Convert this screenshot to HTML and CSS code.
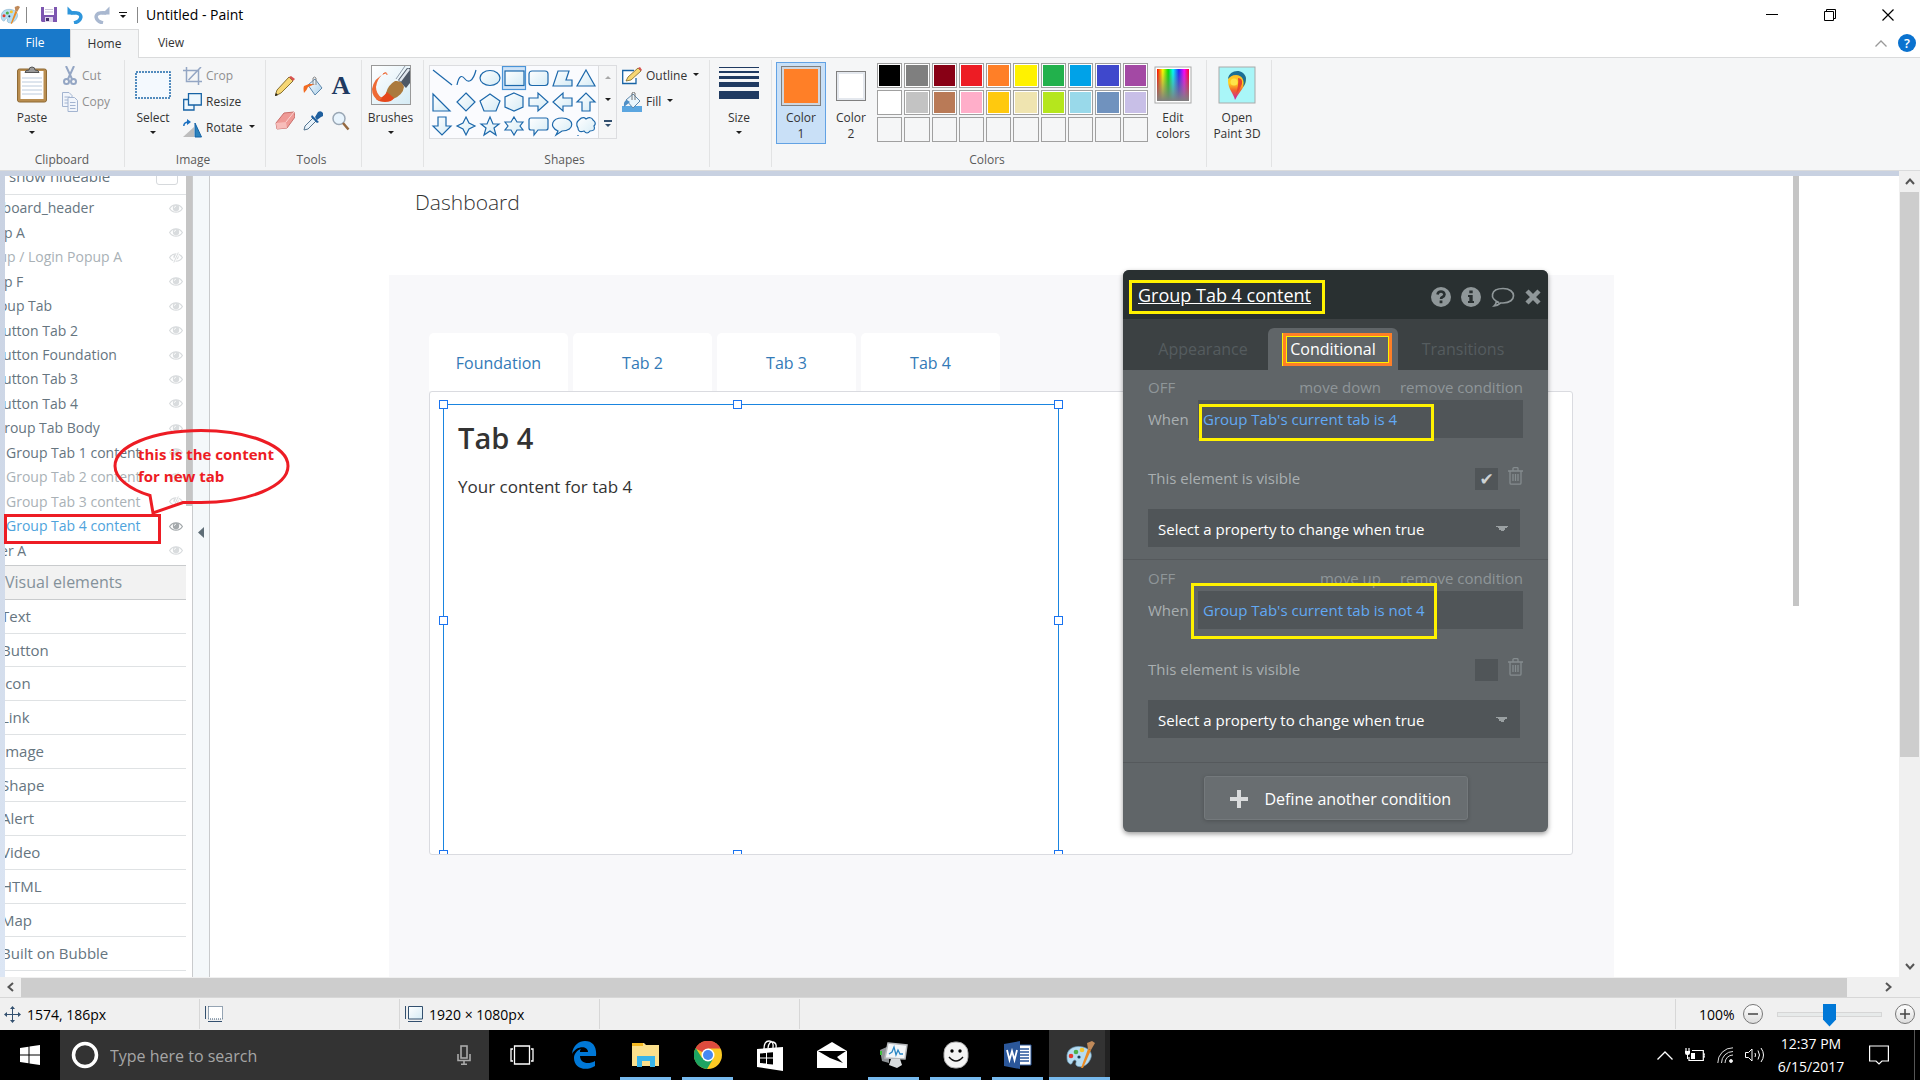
FILE: index.html
```html
<!DOCTYPE html>
<html lang="en">
<head>
<meta charset="utf-8">
<title>Untitled - Paint</title>
<link rel="stylesheet" href="styles.css">
</head>
<body>
<svg class="defs" aria-hidden="true">
  <defs>
    <linearGradient id="glass" x1="0" y1="0" x2="1" y2="1"><stop offset="0" stop-color="#fff"/><stop offset="1" stop-color="#d5ebf5"/></linearGradient>
    <linearGradient id="sky" x1="0" y1="0" x2="1" y2="1"><stop offset="0" stop-color="#fff"/><stop offset="1" stop-color="#a9cfea"/></linearGradient>
    <linearGradient id="rainbow"><stop offset="0" stop-color="#f00"/><stop offset=".18" stop-color="#ff0"/><stop offset=".35" stop-color="#0d0"/><stop offset=".5" stop-color="#0ff"/><stop offset=".68" stop-color="#22f"/><stop offset=".85" stop-color="#f0f"/><stop offset="1" stop-color="#f02"/></linearGradient>
    <linearGradient id="fade" x1="0" y1="0" x2="0" y2="1"><stop offset="0" stop-color="#808080" stop-opacity="0"/><stop offset="1" stop-color="#808080"/></linearGradient>
    <linearGradient id="drop" x1="0" y1="0" x2="0" y2="1"><stop offset="0" stop-color="#ffb52a"/><stop offset=".4" stop-color="#ffd21f"/><stop offset=".65" stop-color="#f4632a"/><stop offset="1" stop-color="#c01fb0"/></linearGradient>
  </defs>
  <symbol id="eye" viewBox="0 0 14 9"><path d="M.6 4.500C3.500-.4 10.500-.4 13.400 4.500 10.500 9.400 3.500 9.400.6 4.500Z" fill="none" stroke="currentColor" stroke-width="1.200"/><circle cx="7" cy="4" r="3.200" fill="currentColor"/><path d="M5.400 3.800A1.600 1.600 0 0 1 7 2.200" stroke="#fff" stroke-width=".8" fill="none"/></symbol>
  <symbol id="eye-off" viewBox="0 0 14 11"><path d="M.6 5.500C3.500.6 10.500.6 13.400 5.500 10.500 10.400 3.500 10.400.6 5.500Z" fill="none" stroke="currentColor" stroke-width="1.200"/><circle cx="7" cy="4.800" r="2.600" fill="currentColor"/><path d="M9.500 0 4.500 11" stroke="#fff" stroke-width="2.500"/><path d="M9.300.5 4.800 10.600" stroke="currentColor" stroke-width="1"/></symbol>
  <symbol id="trash" viewBox="0 0 15 18"><path d="M0 4H15M5 3.500V1.500Q5 .7 6 .7H9Q10 .7 10 1.500V3.500M2 4V16Q2 17.200 3.200 17.200H11.800Q13 17.200 13 16V4M5 7V14M7.500 7V14M10 7V14" fill="none" stroke="currentColor" stroke-width="1.300"/></symbol>
  <symbol id="palette" viewBox="0 0 30 30"><path d="M2 18C1 9 9 5 18 7 26 9 28 15 25 20 22 26 16 28 12 26 9 24 13 21 10 20 7 20 8 25 5 24 3 23 2 21 2 18Z" fill="#b5dcf2" stroke="#6f9dbb" stroke-width=".7"/><circle cx="6" cy="16" r="2.300" fill="#e43b2f"/><circle cx="11" cy="12" r="2.300" fill="#4cb04a"/><circle cx="17" cy="10" r="2.300" fill="#f4c430"/><circle cx="14" cy="17" r="1.600" fill="#1d4058"/><path d="M16 28 23 9 26 10 18 28Z" fill="#e98a24"/><path d="M23 9 22 3 27 1 30 3 26 10Z" fill="#c08a5a"/></symbol>
  <symbol id="caret" viewBox="0 0 6 3"><path d="M0 0H6L3 3Z" fill="#1e1e1e"/></symbol>
</svg>

<header class="titlebar">
  <svg class="app-icon" viewBox="0 0 30 30"><use href="#palette"/></svg>
  <span class="divider"></span>
  <div class="quick-bar">
    <button class="quick" aria-label="Save"><svg width="16" height="15" viewBox="0 0 16 15"><path d="M0 0H16V15H1L0 14Z" fill="#7d56b0"/><path d="M3 0H13V8H3Z" fill="#fff"/><path d="M4 2.500H12M4 5H12" stroke="#c9c2d8"/><path d="M4 10H12V15H4Z" fill="#ddd3ea"/><path d="M5 11H8V14H5Z" fill="#43306b"/></svg></button>
    <button class="quick" aria-label="Undo"><svg width="17" height="18" viewBox="0 0 17 18"><path d="M7 17C15 15 16 8 10 7 8 6.500 6 6.500 3.500 7" fill="none" stroke="#2e96dc" stroke-width="3.500"/><path d="M.5.500V8.500H8.500Z" fill="#2e96dc"/></svg></button>
    <button class="quick" aria-label="Redo"><svg width="17" height="18" viewBox="0 0 17 18"><path d="M10 17C2 15 1 8 7 7 9 6.500 11 6.500 13.500 7" fill="none" stroke="#a9b8d0" stroke-width="3.500"/><path d="M16.500.500V8.500H8.500Z" fill="#a9b8d0"/></svg></button>
    <button class="quick more-tools" aria-label="Customize toolbar"><svg width="8" height="6" viewBox="0 0 8 6"><path d="M0 .5H8" stroke="#111"/><path d="M1 3H7L4 6Z" fill="#111"/></svg></button>
  </div>
  <span class="divider"></span>
  <h1>Untitled - Paint</h1>
  <div class="window-buttons">
    <button aria-label="Minimize"><svg width="12" height="12" viewBox="0 0 12 12"><path d="M0 5.500H12" stroke="#000"/></svg></button>
    <button aria-label="Restore"><svg width="12" height="12" viewBox="0 0 12 12" fill="none" stroke="#000"><path d="M.5 2.500H9.500V11.500H.5ZM2.500 2.500V.5H11.500V9.500H9.500"/></svg></button>
    <button aria-label="Close"><svg width="12" height="12" viewBox="0 0 12 12"><path d="M.5.5 11.500 11.500M11.500.5.5 11.500" stroke="#000" stroke-width="1.200"/></svg></button>
  </div>
</header>

<nav class="ribbon-tabs">
  <button class="file">File</button>
  <button class="current">Home</button>
  <button>View</button>
  <div class="ribbon-help">
    <svg width="12" height="7" viewBox="0 0 12 7"><path d="M.5 6.500 6 1 11.500 6.500" fill="none" stroke="#999" stroke-width="1.300"/></svg>
    <button class="help" aria-label="Help">?</button>
  </div>
</nav>

<section class="ribbon">
  <div class="group g-clipboard">
    <div class="tools">
      <button class="big"><span class="pic"><svg width="32" height="38" viewBox="0 0 32 38"><rect x="1.500" y="3" width="29" height="33" rx="2" fill="#b98d4f" stroke="#8f6a35"/><rect x="4.500" y="5" width="23" height="28" fill="#fff"/><path d="M6 12H26M6 16H26M6 20H26M6 24H26M6 28H26" stroke="#bccbdc"/><path d="M9 6.500Q9 4 13 4 13 1 16 1T19 4Q23 4 23 6.500Z" fill="#9a9a9a" stroke="#555"/></svg></span>Paste<svg class="caret"><use href="#caret"/></svg></button>
      <div class="column">
        <button class="small off"><svg width="16" height="20" viewBox="0 0 16 20" fill="none" stroke="#94a6c4" stroke-width="2"><path d="M4 0 10 13M12 0 6 13"/><circle cx="4.500" cy="15.500" r="2.500"/><circle cx="11.500" cy="15.500" r="2.500"/></svg>Cut</button>
        <button class="small off"><svg width="16" height="20" viewBox="0 0 16 20" fill="#f1f5fb" stroke="#a3b4d0"><path d="M.5.5H7L10 3.500V14.500H.5ZM2.500 5H8M2.500 8H8M2.500 11H8"/><path d="M6 5.500H12.500L15.500 8.500V19.500H6ZM8 10.500H13.500M8 13.500H13.500M8 16.500H13.500"/></svg>Copy</button>
      </div>
    </div>
    <div class="group-name">Clipboard</div>
  </div>
  <div class="group g-image">
    <div class="tools">
      <button class="big"><span class="pic"><svg width="36" height="28" viewBox="0 0 36 28"><rect x="1" y="1" width="34" height="26" fill="#f4f9fe" stroke="#1c68ab" stroke-width="1.500" stroke-dasharray="2 1"/></svg></span>Select<svg class="caret"><use href="#caret"/></svg></button>
      <div class="column">
        <button class="small off"><svg width="19" height="18" viewBox="0 0 19 18" fill="none" stroke="#94a6c4" stroke-width="1.500"><path d="M0 3.500H15.500V18M3.500 0V14.500H19M5.500 13 18 0"/></svg>Crop</button>
        <button class="small"><svg width="19" height="18" viewBox="0 0 19 18" fill="#eef7fd" stroke="#1763a5" stroke-width="1.300"><path d="M.7 6.500H11V17H.7Z"/><path d="M5.500.7H18.300V12H5.500Z"/></svg>Resize</button>
        <button class="small"><svg width="19" height="19" viewBox="0 0 19 19"><path d="M0 18H11V8Z" fill="#bdbdbd"/><path d="M12 18V4L18.500 18Z" fill="#2b83be" stroke="#1763a5"/><path d="M.8 7Q.8 3 6 3" fill="none" stroke="#1a6fc0" stroke-width="1.500"/><path d="M4 0 8 3 4 6Z" fill="#1a6fc0"/></svg>Rotate<svg class="caret"><use href="#caret"/></svg></button>
      </div>
    </div>
    <div class="group-name">Image</div>
  </div>
  <div class="group g-tools">
    <div class="tool-grid">
      <button aria-label="Pencil"><svg width="20" height="20" viewBox="0 0 20 20"><path d="M0 20 2 14 14 1 18 5 6 17Z" fill="#f7d774" stroke="#7a6424" stroke-width=".9"/><path d="M14 1 16 0 20 3 18 5Z" fill="#d9534f"/><path d="M0 20 1 17 3 19Z" fill="#222"/></svg></button>
      <button aria-label="Fill with color"><svg width="20" height="20" viewBox="0 0 20 20"><path d="M5 9 12 3 19 12 12 19Z" fill="url(#sky)" stroke="#5d87ab"/><path d="M6 8 1 10Q0 12 1 17 4 14 5 11L12 8Z" fill="#f26b21"/><path d="M10 9V2Q11.500 0 13 2V9" fill="none" stroke="#888"/></svg></button>
      <button aria-label="Text"><span class="letter">A</span></button>
      <button aria-label="Eraser"><svg width="20" height="19" viewBox="0 0 20 19"><path d="M1 12 9 2 19 1 20 6 12 17 2 18Z" fill="#ef9a96" stroke="#c9706c"/><path d="M1 12 11 11 12 17 2 18Z" fill="#f7bdba"/><path d="M11 11 19 1" stroke="#f9d3d1"/></svg></button>
      <button aria-label="Color picker"><svg width="20" height="20" viewBox="0 0 20 20"><path d="M1 19 2 15 10 7 13 10 5 18Z" fill="#e8f2fa" stroke="#54748f"/><path d="M9 4 16 11 14 12 8 6ZM12 6 15 1Q18-1 20 2T18 6L14 9Z" fill="#1f5f9e"/></svg></button>
      <button aria-label="Magnifier"><svg width="18" height="20" viewBox="0 0 18 20"><circle cx="7" cy="7.500" r="6" fill="#e8f4fd" stroke="#9aa7b5" stroke-width="1.500"/><path d="M11 12 16.500 18.500" stroke="#94683f" stroke-width="2.500"/></svg></button>
    </div>
    <div class="group-name">Tools</div>
  </div>
  <div class="group g-brushes">
    <button class="big"><span class="pic"><svg width="40" height="40" viewBox="0 0 40 40"><rect x=".5" y=".5" width="39" height="39" fill="url(#glass)" stroke="#999"/><path d="M36 3H39V18L35 23 27 15Z" fill="#4d5866"/><path d="M38 4 29 16" stroke="#dfe6ee" stroke-width="2.500"/><path d="M34 1 25 14" stroke="#8e9aa8"/><path d="M24 16Q31 15 33 22 32 30 22 34L15 28Q17 20 24 16Z" fill="#ab7a3d"/><path d="M16 27 23 33Q21 37 14 37 8 37 5 34 11 34 16 27Z" fill="#e5481c"/><path d="M16 8Q13 7 12 9 6 14 5 22 5 29 11 33L8 36Q1 32 1 24 3 13 13 9" fill="#ee6a35"/><path d="M12 9Q16 6 16 10" fill="none" stroke="#ee6a35"/></svg></span>Brushes<svg class="caret"><use href="#caret"/></svg></button>
    <div class="group-name"></div>
  </div>
  <div class="group g-shapes">
    <div class="tools">
      <div class="gallery">
        <svg class="shapes" viewBox="0 0 168 72" fill="url(#glass)" stroke="#1c68ab" stroke-width="1.200">
          <rect x="72.500" y=".5" width="23" height="23" fill="#cfe3f7" stroke="#4a94d8"/>
          <path d="M3 4 22 19" fill="none"/><path d="M27 19C29 9 32 9 35 13S43 16 46 4" fill="none"/><ellipse cx="60" cy="12" rx="10" ry="7.500"/><rect x="75" y="5" width="19" height="14.500"/><rect x="99" y="5" width="19" height="14.500" rx="3"/><path d="M128 5H139L136 14H142V20H123Z"/><path d="M156 4 165 20H147Z"/>
          <path d="M3 28 20 45H3Z"/><path d="M36 27 45 36 36 45 27 36Z"/><path d="M60 28 70 35 66 45H54L50 35Z"/><path d="M84 27 93 31V41L84 45 75 41V31Z"/><path d="M99 32H108V27L118 36 108 45V40H99Z"/><path d="M142 32H133V27L123 36 133 45V40H142Z"/><path d="M152 45V36H147L156 27 165 36H160V45Z"/>
          <path d="M8 51H16V60H21L12 69 3 60H8Z"/><path d="M36 51 39 57 45 60 39 63 36 69 33 63 27 60 33 57Z"/><path d="M60 51 63 58H69L64 62 66 69 60 65 54 69 56 62 51 58H57Z"/><path d="M84 51 87 56H93L90 60 93 64H87L84 69 81 64H75L78 60 75 56H81Z"/><path d="M101 52H116Q118 52 118 54V62Q118 64 116 64H108L104 69V64H101Q99 64 99 62V54Q99 52 101 52Z"/><path d="M128 65C118 60 123 52 132 52 145 52 145 65 132 65L126 69Z"/><path d="M149 54Q153 50 156 53 161 50 163 54 167 57 164 60 166 65 160 65 157 69 154 65 148 67 148 62 145 57 149 54ZM148 69V70"/>
        </svg>
        <div class="gallery-scroll">
          <svg width="6" height="3" viewBox="0 0 6 3"><path d="M0 3H6L3 0Z" fill="#a8a8a8"/></svg>
          <svg width="6" height="3"><use href="#caret"/></svg>
          <svg width="8" height="8" viewBox="0 0 8 8"><path d="M0 1H8" stroke="#33506f" stroke-width="2"/><path d="M1 4H7L4 7Z" fill="#33506f"/></svg>
        </div>
      </div>
      <div class="column">
        <button class="small"><svg width="20" height="18" viewBox="0 0 20 18"><path d="M12 3.500H.7V16.500H14V11" fill="#fff" stroke="#1763a5" stroke-width="1.300"/><path d="M4 14 6 10 16 1 19 4 9 13Z" fill="#f7d774" stroke="#7a6424" stroke-width=".8"/><path d="M16 1 18 0 20 3 19 4Z" fill="#d9534f"/></svg>Outline<svg class="caret"><use href="#caret"/></svg></button>
        <button class="small"><svg width="20" height="20" viewBox="0 0 20 20"><path d="M0 14H20V20H0Z" fill="#5ba6e0"/><path d="M4 8 11 2 18 9 11 16Z" fill="#eaf5fc" stroke="#5d87ab"/><path d="M5 8Q1 9 2 15L8 10Z" fill="#4f8fc6"/><path d="M10 8V1Q11.500-.5 13 1V8" fill="none" stroke="#777"/></svg>Fill<svg class="caret"><use href="#caret"/></svg></button>
      </div>
    </div>
    <div class="group-name">Shapes</div>
  </div>
  <div class="group g-size">
    <button class="big"><span class="pic"><svg width="40" height="36" viewBox="0 0 40 36" fill="#1f3a61"><path d="M0 0H40V1H0ZM0 4H40V6H0ZM0 9H40V12H0ZM0 15H40V20H0ZM0 24H40V32H0Z"/></svg></span>Size<svg class="caret"><use href="#caret"/></svg></button>
    <div class="group-name"></div>
  </div>
  <div class="group g-colors">
    <div class="tools">
      <button class="big color chosen"><span class="pic"><i class="well orange"></i></span>Color<br>1</button>
      <button class="big color"><span class="pic"><i class="well white"></i></span>Color<br>2</button>
      <div class="swatches">
        <i class="c-black"></i><i class="c-gray"></i><i class="c-maroon"></i><i class="c-red"></i><i class="c-orange"></i><i class="c-yellow"></i><i class="c-green"></i><i class="c-blue"></i><i class="c-indigo"></i><i class="c-purple"></i>
        <i class="c-white"></i><i class="c-silver"></i><i class="c-brown"></i><i class="c-rose"></i><i class="c-gold"></i><i class="c-sand"></i><i class="c-lime"></i><i class="c-aqua"></i><i class="c-steel"></i><i class="c-lavender"></i>
        <i></i><i></i><i></i><i></i><i></i><i></i><i></i><i></i><i></i><i></i>
      </div>
      <button class="big edit"><span class="pic"><svg width="38" height="38" viewBox="0 0 38 38"><rect x="1" y="1" width="36" height="36" fill="#fff" stroke="#aaa"/><rect x="3" y="3" width="32" height="32" fill="url(#rainbow)"/><rect x="3" y="3" width="32" height="32" fill="url(#fade)"/></svg></span>Edit<br>colors</button>
    </div>
    <div class="group-name">Colors</div>
  </div>
  <div class="group g-3d">
    <button class="big"><span class="pic"><svg width="38" height="38" viewBox="0 0 38 38"><rect x="1" y="1" width="36" height="36" fill="#a9f6f8" stroke="#aaa"/><path d="M19 6C28 6 30 14 26 20 23 25 20 28 17 34 16 28 10 23 10 15 10 10 14 6 19 6Z" fill="url(#drop)"/><path d="M10 13C11 3 26 2 28 12 28 16 27 19 25 21 27 14 24 9 18 9 14 9 12 11 10 13Z" fill="#1b6f96"/><path d="M20 12Q25 12 24 18 22 24 18 28 21 18 20 12Z" fill="#e8452c"/><circle cx="16" cy="16" r="3.500" fill="#ffe34a"/></svg></span>Open<br>Paint 3D</button>
    <div class="group-name"></div>
  </div>
</section>

<main class="workspace">
  <div class="picture">
    <aside class="side">
      <label class="hideable">show hideable <input type="checkbox"></label>
      <ul class="tree">
        <li>dashboard_header<svg><use href="#eye"/></svg></li>
        <li>Group A<svg><use href="#eye"/></svg></li>
        <li class="hidden">Signup / Login Popup A<svg><use href="#eye-off"/></svg></li>
        <li>Group F<svg><use href="#eye"/></svg></li>
        <li class="l1">Group Tab<svg><use href="#eye"/></svg></li>
        <li class="l2">Button Tab 2<svg><use href="#eye"/></svg></li>
        <li class="l2">Button Foundation<svg><use href="#eye"/></svg></li>
        <li class="l2">Button Tab 3<svg><use href="#eye"/></svg></li>
        <li class="l2">Button Tab 4<svg><use href="#eye"/></svg></li>
        <li class="l2">Group Tab Body<svg><use href="#eye"/></svg></li>
        <li class="l3">Group Tab 1 content<svg><use href="#eye"/></svg></li>
        <li class="l3 hidden">Group Tab 2 content<svg><use href="#eye-off"/></svg></li>
        <li class="l3 hidden">Group Tab 3 content<svg><use href="#eye-off"/></svg></li>
        <li class="l3 selected">Group Tab 4 content<svg><use href="#eye"/></svg></li>
        <li>Footer A<svg><use href="#eye"/></svg></li>
      </ul>
      <h2>Visual elements</h2>
      <ul class="elements">
        <li>Text</li><li>Button</li><li>Icon</li><li>Link</li><li>Image</li><li>Shape</li><li>Alert</li><li>Video</li><li>HTML</li><li>Map</li><li>Built on Bubble</li>
      </ul>
    </aside>
    <div class="side-scroll"><i></i></div>
    <div class="collapse"><button aria-label="Collapse"><svg width="6" height="11" viewBox="0 0 6 11"><path d="M6 0V11L0 5.500Z" fill="#5f6e77"/></svg></button></div>

    <div class="editor">
      <h2 class="page-title">Dashboard</h2>
      <div class="page">
        <nav class="page-tabs"><a href="#">Foundation</a><a href="#">Tab 2</a><a href="#">Tab 3</a><a href="#">Tab 4</a></nav>
        <div class="tab-body">
          <div class="tab-content">
            <h3>Tab 4</h3>
            <p>Your content for tab 4</p>
            <i class="handle nw"></i><i class="handle n"></i><i class="handle ne"></i><i class="handle w"></i><i class="handle e"></i><i class="handle sw"></i><i class="handle s"></i><i class="handle se"></i>
          </div>
        </div>
      </div>

      <section class="panel">
        <header>
          <h3>Group Tab 4 content</h3>
          <svg width="20" height="20" viewBox="0 0 20 20"><circle cx="10" cy="10" r="10" fill="currentColor"/><path d="M6.500 7.500Q7 4.500 10 4.500T13.500 7.500Q13.500 9 11.500 10 10 10.700 10 12" fill="none" stroke="#293031" stroke-width="2.600"/><path d="M8.600 13.500H11.400V16.200H8.600Z" fill="#293031"/></svg>
          <svg width="20" height="20" viewBox="0 0 20 20"><circle cx="10" cy="10" r="10" fill="currentColor"/><path d="M8.300 3.500H11.700V6.300H8.300ZM7 8H11.700V14H13V16H7V14H8.300V10H7Z" fill="#293031"/></svg>
          <svg width="24" height="20" viewBox="0 0 24 20"><path d="M8 15.500C-2 12-.5 1.500 12 1.500 26 1.500 26 16 12 16Q10 16 9.500 16 6 19 3 19 5 17 5.500 14.300" fill="none" stroke="currentColor" stroke-width="1.700"/></svg>
          <svg width="16" height="16" viewBox="0 0 16 16"><path d="M2 2 14 14M14 2 2 14" stroke="currentColor" stroke-width="4.500"/></svg>
        </header>
        <nav><button>Appearance</button><button class="current">Conditional</button><button>Transitions</button></nav>
        <div class="condition">
          <div class="actions"><span>OFF</span><a href="#">move down</a><a href="#">remove condition</a></div>
          <div class="when"><label for="when1">When</label><input id="when1" type="text" value="Group Tab's current tab is 4"></div>
          <div class="visible"><label for="vis1">This element is visible</label><input id="vis1" type="checkbox" checked><svg width="15" height="18"><use href="#trash"/></svg></div>
          <select aria-label="Property"><option>Select a property to change when true</option></select>
        </div>
        <div class="condition">
          <div class="actions"><span>OFF</span><a href="#">move up</a><a href="#">remove condition</a></div>
          <div class="when"><label for="when2">When</label><input id="when2" type="text" value="Group Tab's current tab is not 4"></div>
          <div class="visible"><label for="vis2">This element is visible</label><input id="vis2" type="checkbox"><svg width="15" height="18"><use href="#trash"/></svg></div>
          <select aria-label="Property"><option>Select a property to change when true</option></select>
        </div>
        <div class="more"><button><svg width="18" height="18" viewBox="0 0 18 18"><path d="M9 0V18M0 9H18" stroke="#d9dbdc" stroke-width="4"/></svg>Define another condition</button></div>
        <i class="mark m-title"></i><i class="mark m-tab"></i><i class="mark m-when1"></i><i class="mark m-when2"></i>
      </section>
      <div class="page-scroll"></div>
    </div>

    <div class="red-box"></div>
    <div class="callout">
      <svg width="178" height="88" viewBox="0 0 178 88"><path d="M37 67.500C16 61 2 50 2 38 2 18 40 2.500 88 2.500S175 18 175 38 136 74.500 88 74.500H70L40 85Z" fill="none" stroke="#ed1c24" stroke-width="3"/></svg>
      <p>this is the content<br>for new tab</p>
    </div>
  </div>
  <div class="vscroll">
    <svg width="10" height="7" viewBox="0 0 10 7"><path d="M1 6 5 1.500 9 6" fill="none" stroke="#555" stroke-width="2"/></svg>
    <div class="track"><i></i></div>
    <svg width="10" height="7" viewBox="0 0 10 7"><path d="M1 1 5 5.500 9 1" fill="none" stroke="#555" stroke-width="2"/></svg>
  </div>
</main>
<div class="hscroll">
  <svg width="7" height="10" viewBox="0 0 7 10"><path d="M6 1 1.500 5 6 9" fill="none" stroke="#555" stroke-width="2"/></svg>
  <div class="track"><i></i></div>
  <svg width="7" height="10" viewBox="0 0 7 10"><path d="M1 1 5.500 5 1 9" fill="none" stroke="#555" stroke-width="2"/></svg>
</div>

<footer class="status">
  <div class="cell"><svg width="17" height="17" viewBox="0 0 17 17"><path d="M8.500 1V16M1 8.500H16" stroke="#33506f"/><path d="M8.500 0 11 3H6ZM8.500 17 11 14H6ZM0 8.500 3 6V11ZM17 8.500 14 6V11Z" fill="#33506f"/></svg>1574, 186px</div>
  <div class="cell"><svg width="19" height="17" viewBox="0 0 19 17"><path d="M1.500 0V13M4 15.500H18" stroke="#33506f"/><path d="M4.500.5H18.500V13H4.500Z" fill="#fff" stroke="#33506f" stroke-dasharray="1 1"/></svg></div>
  <div class="cell"><svg width="19" height="17" viewBox="0 0 19 17"><path d="M1.500 0V13M4 15.500H18" stroke="#33506f"/><path d="M4.500.5H18.500V13H4.500Z" fill="url(#glass)" stroke="#33506f"/></svg>1920 × 1080px</div>
  <div class="cell"></div>
  <div class="cell rest"></div>
  <div class="zoom">
    <label for="zoom">100%</label>
    <button aria-label="Zoom out"><svg width="10" height="10" viewBox="0 0 10 10"><path d="M0 5H10" stroke="#444" stroke-width="1.500"/></svg></button>
    <input id="zoom" type="range" min="0" max="100" value="50">
    <button aria-label="Zoom in"><svg width="10" height="10" viewBox="0 0 10 10"><path d="M0 5H10M5 0V10" stroke="#444" stroke-width="1.500"/></svg></button>
  </div>
</footer>

<footer class="taskbar">
  <button class="start" aria-label="Start"><svg width="20" height="20" viewBox="0 0 20 20" fill="#fff"><path d="M0 3 8.500 1.700V9.500H0ZM9.500 1.600 20 0V9.500H9.500ZM0 10.500H8.500V18.300L0 17ZM9.500 10.500H20V20L9.500 18.400Z"/></svg></button>
  <div class="search">
    <svg width="28" height="28" viewBox="0 0 28 28"><circle cx="14" cy="14" r="11.500" fill="none" stroke="#fff" stroke-width="3.500"/></svg>
    <input type="text" placeholder="Type here to search" aria-label="Search">
    <svg width="14" height="20" viewBox="0 0 14 20" fill="none" stroke="#aaa" stroke-width="1.600"><rect x="4" y="1" width="6" height="12"/><path d="M1 9V15.500H13V9M7 16V19M4 19.200H10"/></svg>
  </div>
  <div class="apps">
    <button aria-label="Task view"><svg width="24" height="20" viewBox="0 0 24 20" fill="none" stroke="#fff" stroke-width="1.300"><path d="M4.500 1H19.500V19H4.500ZM3 4H1V16H3M21 4H23V16H21"/></svg></button>
    <button aria-label="Edge"><svg width="26" height="28" viewBox="0 0 26 28"><path d="M1 13C2 4 8 0 14 0 22 0 26 6 25 15H9C9 22 17 24 24 20V25C14 31 3 27 3 17 3 13 6 9 10 8 9 9 9 10 9 11H17C17 5 6 4 1 13Z" fill="#0078d7"/></svg></button>
    <button class="open" aria-label="File Explorer"><svg width="28" height="26" viewBox="0 0 28 26"><path d="M0 1H12L14 3H27V24H0Z" fill="#fbe08c"/><path d="M0 1H11V4H0Z" fill="#f5b921"/><path d="M5 14H23V25H18V19H10V25H5Z" fill="#39b5ea"/></svg></button>
    <button class="open" aria-label="Chrome"><svg width="28" height="28" viewBox="0 0 28 28"><circle cx="14" cy="14" r="14" fill="#fbc924"/><path d="M14 14 1.500 7.500A14 14 0 0 1 26.500 7.500H14Z" fill="#dd4b3e"/><path d="M1.700 7A14 14 0 0 0 13 28L19 18 14 14 8 17Z" fill="#1da462"/><circle cx="14" cy="14" r="6.500" fill="#fff"/><circle cx="14" cy="14" r="5" fill="#4688f1"/></svg></button>
    <button aria-label="Store"><svg width="26" height="32" viewBox="0 0 26 32"><path d="M7 10Q7 2 12 2T16 9M11 9Q12 2 16 3T19 9" fill="none" stroke="#fff" stroke-width="1.300"/><path d="M0 10 26 8V32L0 28Z" fill="#fff"/><path d="M3 14.500 9 14V18.500H3ZM10 13.800 16 13.300V18.500H10ZM3 19.500H9V24.500L3 24ZM10 19.500H16V25.500L10 25Z" fill="#000"/></svg></button>
    <button aria-label="Mail"><svg width="30" height="26" viewBox="0 0 30 26"><path d="M0 9 15 0 30 9V26H0Z" fill="#fff"/><path d="M1 9H29L20 15 26 21 13 16Z" fill="#000"/></svg></button>
    <button class="open" aria-label="Task Manager"><svg width="28" height="28" viewBox="0 0 28 28"><path d="M0 9 9 5V22L2 20Z" fill="#8f9396"/><path d="M1 10V14" stroke="#3fc03f" stroke-width="2"/><path d="M8 2 27 4 25 18 5 17Z" fill="#f3f6f8" stroke="#b5b8bb" stroke-width="1.500"/><path d="M9 13 12 11 14 6 16 14 18 9 20 13 23 13" fill="none" stroke="#2a87c5" stroke-width="1.300"/><path d="M11 18 20 18 22 24 17 27 9 24Z" fill="#d9dcde"/></svg></button>
    <button class="open" aria-label="Messenger"><svg width="26" height="28" viewBox="0 0 26 28"><rect x="1" y="1" width="24" height="26" rx="11" fill="#f4f4f4" stroke="#aaa"/><circle cx="9" cy="10" r="1.700"/><circle cx="17" cy="10" r="1.700"/><path d="M6 16Q13 24 20 16" fill="none" stroke="#111" stroke-width="1.500"/></svg></button>
    <button class="open" aria-label="Word"><svg width="28" height="28" viewBox="0 0 28 28"><path d="M14 4H27V24H14Z" fill="#fff" stroke="#2b579a"/><path d="M16 8H25M16 11H25M16 14H25M16 17H25M16 20H25" stroke="#2b579a" stroke-width="1.500"/><path d="M0 3 16 0V28L0 25Z" fill="#2b579a"/><path d="M3 9 5.500 19 8 10 10.500 19 13 9" fill="none" stroke="#fff" stroke-width="1.800"/></svg></button>
    <button class="open active" aria-label="Paint"><svg width="30" height="30"><use href="#palette"/></svg></button>
  </div>
  <div class="tray">
    <svg width="16" height="9" viewBox="0 0 16 9"><path d="M.5 8.500 8 1 15.500 8.500" fill="none" stroke="#fff" stroke-width="1.300"/></svg>
    <svg width="20" height="14" viewBox="0 0 20 14"><path d="M7 2.500H18.300V12.500H4V9M18.500 6H20V9H18.500M1 0V3M4 0V3" fill="none" stroke="#fff" stroke-width="1.200"/><path d="M0 3H5V5Q5 7 3 7V11H2V7Q0 7 0 5ZM6 5H10V11H6Z" fill="#fff"/></svg>
    <svg width="16" height="16" viewBox="0 0 16 16" fill="none" stroke="#ddd"><path d="M.8 16A15 15 0 0 1 16 .8M4.500 16A11.500 11.500 0 0 1 16 4.500M8 16A8 8 0 0 1 16 8"/><circle cx="14" cy="14" r="1.500" fill="#fff"/></svg>
    <svg width="20" height="16" viewBox="0 0 20 16" fill="none" stroke="#fff"><path d="M.5 5.500H3.500L7 2V14L3.500 10.500H.5ZM10 6Q11 8 10 10M13 3.500Q16 8 13 12.500M16 1Q21 8 16 15"/></svg>
    <div class="clock">12:37 PM<br>6/15/2017</div>
    <svg width="20" height="20" viewBox="0 0 20 20" fill="none" stroke="#fff" stroke-width="1.200"><path d="M.6 1H19.400V16H13L10 19 7 16H.6Z"/></svg>
    <span class="peek"></span>
  </div>
</footer>
</body>
</html>
```
FILE: styles.css
```css
* { box-sizing: border-box; }
body {
  margin: 0;
  height: 100vh;
  display: flex;
  flex-direction: column;
  overflow: hidden;
  background: #fff;
  color: #333;
  font: 12px/16px "Open Sans", "Noto Sans", sans-serif;
}
button { border: 0; padding: 0; background: none; font: inherit; color: inherit; }
h1, h2, h3, p, ul { margin: 0; padding: 0; font-weight: 400; list-style: none; }
a { text-decoration: none; color: inherit; }
svg { flex: none; }
.defs { position: absolute; width: 0; height: 0; }

/* title bar */
.titlebar { height: 29px; flex: none; display: flex; align-items: center; }
.app-icon { width: 20px; height: 20px; }
.divider { width: 1px; height: 16px; background: #888; margin-left: 6px; }
.quick-bar { display: flex; align-items: center; padding-left: 9px; }
.quick { display: flex; justify-content: center; width: 26px; }
.more-tools { width: 17px; }
.titlebar h1 { font-size: 14px; color: #000; margin-left: 8px; }
.window-buttons { margin-left: auto; display: flex; padding-right: 3px; }
.window-buttons button { width: 58px; height: 29px; display: flex; align-items: center; justify-content: center; }

/* ribbon */
.ribbon-tabs { height: 29px; flex: none; display: flex; border-bottom: 1px solid #dadbdc; }
.ribbon-tabs > button { width: 64px; height: 28px; }
.ribbon-tabs .file { width: 70px; background: #1979ca; color: #fff; }
.ribbon-tabs .current { width: 69px; height: 29px; background: #f5f6f7; border: 1px solid #dadbdc; border-bottom: 0; }
.ribbon-help { margin-left: auto; display: flex; align-items: center; gap: 11px; padding-right: 4px; }
.help { width: 18px; height: 18px; border-radius: 50%; background: #0a72cf; color: #fff; font-weight: 600; font-size: 13px; }
.ribbon { height: 113px; flex: none; display: flex; background: #f5f6f7; border-bottom: 1px solid #dadbdc; }
.group { display: flex; flex-direction: column; justify-content: space-between; margin: 2px 0 3px; border-right: 1px solid #e2e3e4; }
.group-name { text-align: center; height: 15px; padding-right: 4px; color: #5a5a5a; }
.tools { display: flex; }
.big { display: flex; flex-direction: column; align-items: center; margin-top: 5px; text-align: center; }
.pic { height: 40px; margin-bottom: 5px; display: flex; align-items: center; justify-content: center; }
.caret { width: 6px; height: 3px; margin-top: 5px; }
.column { display: flex; flex-direction: column; padding-top: 3px; }
.small { height: 26px; display: flex; align-items: center; gap: 4px; }
.small .caret { margin: 0 0 4px 2px; }
.off { color: #8f8f8f; }
.g-clipboard { width: 125px; padding-left: 15px; }
.g-clipboard .group-name { margin-left: -11px; }
.g-clipboard .big { width: 34px; }
.g-clipboard .column { margin-left: 13px; }
.g-image { width: 141px; padding-left: 8px; }
.g-image .group-name { margin-left: -8px; }
.g-image .big { width: 40px; }
.g-image .column { margin-left: 10px; }
.g-tools { width: 96px; }
.tool-grid { display: grid; grid-template-columns: repeat(3, 28px); grid-template-rows: 35px 35px; padding: 8px 0 0 5px; }
.tool-grid button { display: flex; align-items: center; justify-content: center; }
.letter { font: bold 26px/26px "Liberation Serif", serif; color: #1f3a61; }
.g-brushes { width: 62px; padding-right: 4px; }
.g-shapes { width: 286px; padding-left: 5px; }
.g-shapes .group-name { margin-left: -5px; }
.gallery { display: flex; width: 188px; height: 74px; margin-top: 5px; border: 1px solid #dcdde0; background: #fafbfe; }
.shapes { width: 168px; height: 72px; }
.gallery-scroll { flex: 1; border-left: 1px solid #dcdde0; display: flex; flex-direction: column; justify-content: space-around; align-items: center; background: #f5f6f7; }
.g-shapes .column { margin-left: 5px; }
.g-size { width: 62px; padding-right: 3px; }
.g-size .big, .g-brushes .big { align-self: center; }
.g-colors { width: 435px; padding-left: 4px; }
.g-colors .group-name { margin-left: -4px; }
.color { width: 50px; height: 82px; margin-top: 2px; padding-top: 3px; border: 1px solid transparent; }
.color .pic { margin-bottom: 4px; }
.chosen { background: #c9e0f7; border-color: #62a2e4; }
.well { border: 1px solid #808080; box-shadow: inset 0 0 0 2px #e4e8ee; }
.well.orange { width: 40px; height: 40px; background: #ff7f27; box-shadow: inset 0 0 0 2px #cfd6df; }
.well.white { width: 30px; height: 30px; background: #fff; }
.swatches { display: grid; grid-template-columns: repeat(10, 1fr); grid-auto-rows: 25px; gap: 2px; width: 271px; margin: 3px 0 0 1px; }
.swatches i { border: 1px solid #a0a0a0; box-shadow: inset 0 0 0 1px #fff; }
.swatches i:nth-child(n+21) { box-shadow: none; }
.c-black { background: #000; } .c-gray { background: #7f7f7f; } .c-maroon { background: #880015; } .c-red { background: #ed1c24; }
.c-orange { background: #ff7f27; } .c-yellow { background: #fff200; } .c-green { background: #22b14c; } .c-blue { background: #00a2e8; }
.c-indigo { background: #3f48cc; } .c-purple { background: #a349a4; } .c-white { background: #fff; } .c-silver { background: #c3c3c3; }
.c-brown { background: #b97a57; } .c-rose { background: #ffaec9; } .c-gold { background: #ffc90e; } .c-sand { background: #efe4b0; }
.c-lime { background: #b5e61d; } .c-aqua { background: #99d9ea; } .c-steel { background: #7092be; } .c-lavender { background: #c8bfe7; }
.edit { width: 50px; }
.g-3d { width: 65px; padding-right: 4px; }
.g-3d .big { align-self: center; white-space: nowrap; }

/* canvas */
.workspace { flex: 1; min-height: 0; display: flex; background: #c8d1e1; }
.picture { position: relative; flex: 1; min-width: 0; display: flex; margin-top: 5px; padding-left: 5px; background: linear-gradient(#c8d1e1, #dce6f4); overflow: hidden; }
.side { width: 181px; flex: none; background: #fff; overflow: hidden; color: #66757f; font-size: 14px; line-height: 18px; }
.hideable { display: flex; justify-content: space-between; height: 19px; border-bottom: 1px solid #dfe2e4; padding: 0 8px 0 4px; font-size: 15px; line-height: 0; }
.hideable input { appearance: none; margin: -12px 0 0; width: 22px; height: 21px; border: 1px solid #d6d9dc; border-radius: 3px; }
.tree { height: 370px; display: grid; grid-template-rows: repeat(15, 1fr); padding: 1px 0 2px; }
.tree li { display: flex; justify-content: space-between; align-items: center; white-space: nowrap; margin-left: -34px; padding-right: 3px; }
.tree .l1 { margin-left: -22px; }
.tree .l2 { margin-left: -11px; }
.tree .l3 { margin-left: 1px; }
.tree .hidden { color: #a9b1b6; }
.tree .selected { color: #4ea3dc; }
.tree svg { width: 14px; height: 11px; color: #d9dcde; }
.tree .selected svg { color: #a4a9ac; }
.side h2 { height: 35px; border: solid #c9cbcd; border-width: 1px 0; background: #f2f2f2; font-size: 16px; line-height: 33px; color: #84919a; white-space: nowrap; }
.elements { height: 371px; display: grid; grid-template-rows: repeat(11, minmax(0, 1fr)); font-size: 15px; }
.elements li { border-bottom: 1px solid #dfe2e4; line-height: 32px; margin-left: -4px; white-space: nowrap; }
.side-scroll { width: 6px; flex: none; background: #fff; }
.side-scroll i { display: block; height: 330px; background: #c5c5c5; }
.collapse { width: 18px; flex: none; border: solid #c9cbcd; border-width: 0 1px; background: #f4f8fa; padding-top: 351px; }
.collapse button { display: block; margin-left: 5px; line-height: 0; }
.editor { position: relative; flex: 1; min-width: 0; display: flex; flex-direction: column; background: #fff; padding: 0 285px 0 179px; }
.page-title { height: 99px; padding: 12px 0 0 26px; font-size: 21px; line-height: 28px; font-weight: 300; color: #333; }
.page { flex: 1; background: #f8f8fa; padding: 58px 41px 0 40px; }
.page-tabs { display: flex; gap: 5px; }
.page-tabs a { width: 139px; height: 58px; border-radius: 5px 5px 0 0; background: #fff; color: #337ab7; text-align: center; font-size: 16px; line-height: 60px; }
.tab-body { height: 464px; border: 1px solid #dadbe0; border-radius: 3px; background: #fff; padding: 12px 0 0 13px; overflow: hidden; }
.tab-content { position: relative; width: 616px; height: 460px; border: 1px solid #1a85e0; padding: 13px 14px 0; }
.tab-content h3 { font-size: 29px; line-height: 40px; font-weight: 600; }
.tab-content p { font-size: 17px; line-height: 24px; margin-top: 17px; }
.handle { position: absolute; width: 9px; height: 9px; border: 1px solid #1a73f0; background: #fff; }
.nw, .n, .ne { top: -5px; }
.w, .e { top: 211px; }
.sw, .s, .se { top: 445px; }
.nw, .w, .sw { left: -5px; }
.n, .s { left: 289px; }
.ne, .e, .se { right: -5px; }
.page-scroll { position: absolute; top: 0; right: 100px; width: 6px; height: 430px; background: #c5c5c5; }

/* property panel floating over the page */
.panel { position: absolute; top: 94px; right: 351px; width: 425px; height: 562px; border-radius: 6px; background: #606568; color: #a9afb1; font-size: 15px; line-height: 24px; box-shadow: 0 2px 5px #0006; overflow: hidden; }
.panel header { height: 49px; display: flex; align-items: center; gap: 10px; padding: 4px 7px 0 15px; background: #293031; color: #8f9799; }
.panel h3 { flex: 1; padding-bottom: 3px; color: #fff; font-size: 18px; line-height: 24px; text-decoration: underline; }
.panel nav { height: 51px; display: flex; align-items: flex-end; background: #3c4143; }
.panel nav button { width: 145px; height: 42px; padding-left: 15px; color: #555c5f; font-size: 16px; }
.panel nav .current { width: 130px; padding: 0; border-radius: 6px 6px 0 0; background: #606568; color: #fff; }
.panel nav button:last-child { padding: 0; width: 130px; }
.condition { height: 190px; padding: 5px 25px 0; border-bottom: 1px solid #55595c; }
.condition + .condition { height: 203px; padding-top: 6px; }
.actions { display: flex; gap: 19px; height: 25px; color: #8f9699; }
.actions span { margin-right: auto; }
.when { display: flex; }
.when label { width: 50px; line-height: 38px; }
.when input { flex: 1; height: 38px; border: 0; padding: 0 5px; background: #505558; color: #62a9f4; font: inherit; }
.visible { display: flex; align-items: center; height: 22px; margin: 30px 0 19px; }
.visible label { flex: 1; padding-bottom: 2px; }
.visible input { appearance: none; width: 23px; height: 22px; margin: 0 10px 0 0; background: #505558; }
.visible input:checked::after { content: "✔"; display: block; text-align: center; color: #cdd2d4; font: 17px/22px "DejaVu Sans", sans-serif; }
.visible svg { color: #858c8f; margin-bottom: 6px; }
.condition select { appearance: none; display: block; width: 372px; height: 38px; border: 0; padding: 1px 10px 0; color: #fff; font: inherit; background: linear-gradient(to bottom right, #9aa0a2 50%, transparent 50%) 354px 17px / 6px 6px no-repeat, linear-gradient(to bottom left, #9aa0a2 50%, transparent 50%) 348px 17px / 6px 6px no-repeat, #505558; }
.more { display: flex; justify-content: center; padding-top: 13px; }
.more button { display: flex; align-items: center; gap: 17px; width: 264px; height: 44px; padding: 1px 0 0 25px; border: 1px solid #74797c; border-radius: 3px; background: #696e71; color: #fff; font-size: 16px; box-shadow: 0 1px 4px #0003; }

/* hand-drawn marks */
.mark { position: absolute; border: 3px solid #fff200; }
.m-title { left: 6px; top: 10px; width: 196px; height: 34px; }
.m-tab { left: 160px; top: 63px; width: 109px; height: 33px; border-color: #ff7f27; box-shadow: -1px 0 #fff200, inset 0 0 0 1px #fff200; }
.m-when1 { left: 76px; top: 134px; width: 235px; height: 37px; }
.m-when2 { left: 68px; top: 313px; width: 246px; height: 56px; }
.red-box { position: absolute; left: 4px; top: 338px; width: 157px; height: 30px; border: 3px solid #ed1c24; }
.callout { position: absolute; left: 113px; top: 252px; width: 178px; height: 88px; }
.callout svg { position: absolute; inset: 0; }
.callout p { position: relative; padding: 15px 0 0 25px; color: #ed1c24; font-size: 15px; line-height: 22px; font-weight: 700; white-space: nowrap; }

/* window scroll bars */
.vscroll { width: 21px; flex: none; display: flex; flex-direction: column; align-items: center; gap: 7px; padding: 7px 0; background: #f0f0f0; }
.vscroll .track { flex: 1; width: 19px; }
.vscroll i { display: block; height: 74%; background: #cdcdcd; }
.hscroll { height: 20px; flex: none; display: flex; align-items: center; gap: 7px; padding: 0 28px 0 7px; background: #f0f0f0; }
.hscroll .track { flex: 1; height: 19px; }
.hscroll i { display: block; height: 19px; margin-right: 31px; background: #cdcdcd; }

/* status bar */
.status { height: 33px; flex: none; display: flex; align-items: stretch; background: #f0f0f0; border-top: 1px solid #d7d7d7; color: #000; font-size: 14px; }
.cell { width: 200px; display: flex; align-items: center; gap: 6px; padding: 1px 0 0 4px; margin: 1px 0; border-right: 1px solid #d7d7d7; }
.cell.rest { flex: 1; }
.zoom { width: 244px; display: flex; align-items: center; padding: 0 5px 0 23px; }
.zoom label { flex: 1; padding-top: 1px; }
.zoom button { width: 20px; height: 20px; border: 1px solid #777; border-radius: 50%; background: linear-gradient(#fff, #ddd); display: flex; align-items: center; justify-content: center; }
.zoom input { appearance: none; width: 105px; height: 24px; margin: 0 13px 0 14px; background: linear-gradient(#e7eaea, #e7eaea) center / 100% 5px no-repeat; }
.zoom input::-webkit-slider-runnable-track { height: 5px; border: 1px solid #d6d6d6; }
.zoom input::-webkit-slider-thumb { appearance: none; width: 13px; height: 23px; margin-top: -9px; background: #0078d7; clip-path: polygon(0 0, 100% 0, 100% 70%, 50% 100%, 0 70%); }

/* task bar */
.taskbar { height: 50px; flex: none; display: flex; background: #000; color: #fff; }
.taskbar button { display: flex; align-items: center; justify-content: center; }
.start { width: 60px; }
.search { width: 429px; display: flex; align-items: center; padding: 0 18px 0 11px; background: #333; }
.search input { flex: 1; border: 0; background: none; padding: 1px 11px 0; color: #fff; font: 16px/24px "Open Sans", sans-serif; }
.search input::placeholder { color: #a6a6a6; opacity: 1; }
.apps { display: flex; gap: 11px; padding-left: 7px; }
.apps button { width: 51px; padding-top: 2px; border-bottom: 3px solid transparent; }
.apps .open { border-color: #76b9ed; }
.apps .active { width: 61px; margin-left: -5px; background: linear-gradient(90deg, #333 56px, #222 56px); }
.tray { margin-left: auto; display: flex; align-items: center; gap: 12px; }
.clock { width: 68px; margin-right: 12px; text-align: center; font-size: 14px; line-height: 23px; }
.peek { align-self: stretch; width: 6px; border-left: 1px solid #555; margin-left: 13px; }
```
